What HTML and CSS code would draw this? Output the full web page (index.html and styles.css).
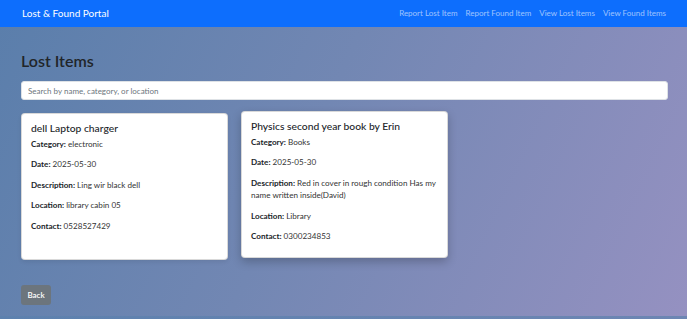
FILE: index.html
```html
<!DOCTYPE html>
<html lang="en">
<head>
    <meta charset="UTF-8">
    <meta name="viewport" content="width=device-width, initial-scale=1.0">
    <title>Lost Items</title>
    <link rel="stylesheet" href="styles.css">
</head>
<body>
    <div class="page">
        <nav class="navbar">
            <a class="brand" href="#">Lost &amp; Found Portal</a>
            <div class="nav-links">
                <a href="#">Report Lost Item</a>
                <a href="#">Report Found Item</a>
                <a href="#">View Lost Items</a>
                <a href="#">View Found Items</a>
            </div>
        </nav>

        <main class="content">
            <h2 class="page-title">Lost Items</h2>
            <input class="search" type="text" placeholder="Search by name, category, or location">

            <div class="card-grid">
                <div class="card">
                    <h5 class="card-title">dell Laptop charger</h5>
                    <p><strong>Category:</strong> electronic</p>
                    <p><strong>Date:</strong> 2025-05-30</p>
                    <p><strong>Description:</strong> Ling wir black dell</p>
                    <p><strong>Location:</strong> library cabin 05</p>
                    <p><strong>Contact:</strong> 0528527429</p>
                </div>
                <div class="card hovered">
                    <h5 class="card-title">Physics second year book by Erin</h5>
                    <p><strong>Category:</strong> Books</p>
                    <p><strong>Date:</strong> 2025-05-30</p>
                    <p><strong>Description:</strong> Red in cover in rough condition Has my name written inside(David)</p>
                    <p><strong>Location:</strong> Library</p>
                    <p><strong>Contact:</strong> 0300234853</p>
                </div>
            </div>

            <a class="btn-back" href="#">Back</a>
        </main>
    </div>
</body>
</html>
```

FILE: styles.css
```css
* {
    margin: 0;
    padding: 0;
    box-sizing: border-box;
}

html {
    background: linear-gradient(90deg, #5d81ae, #6d86b3);
}

body {
    font-family: Lato, "Noto Sans", sans-serif;
    font-size: 8.1px;
    line-height: 12.4px;
    color: #212529;
}

.page {
    height: 316px;
    background: linear-gradient(115deg, #5a7eab 0%, #7287b3 45%, #9591c1 100%);
}

.navbar {
    height: 27px;
    background: #0d6efd;
    display: flex;
    align-items: center;
    justify-content: space-between;
    padding: 0 21px 0 22px;
}

.brand {
    color: #fff;
    text-decoration: none;
    font-size: 10px;
}

.nav-links {
    display: flex;
    gap: 8px;
}

.nav-links a {
    color: rgba(255, 255, 255, 0.6);
    text-decoration: none;
    font-size: 8px;
}

.content {
    padding: 24px 19px 0 21px;
}

.page-title {
    font-size: 16px;
    font-weight: 600;
    line-height: 20px;
    margin-bottom: 10px;
}

.search {
    display: block;
    width: 100%;
    height: 19px;
    border: 1px solid #dee2e6;
    border-radius: 3px;
    padding: 0 6px;
    font-family: inherit;
    font-size: 8px;
    background: #fff;
    outline: none;
}

.search::placeholder {
    color: #6c757d;
}

.card-grid {
    display: grid;
    grid-template-columns: repeat(3, 1fr);
    gap: 13px;
    margin-top: 13px;
}

.card {
    background: #fff;
    border: 1px solid rgba(0, 0, 0, 0.15);
    border-radius: 4px;
    padding: 8px 8px 7px 9px;
    box-shadow: 0 2px 4px rgba(0, 0, 0, 0.08);
}

.card.hovered {
    transform: translateY(-2px);
    box-shadow: 0 4px 10px rgba(0, 0, 0, 0.22);
}

.card-title {
    font-size: 10.3px;
    font-weight: 500;
    line-height: 13px;
    margin-bottom: 3px;
}

.card p {
    margin-bottom: 8px;
    color: #333;
}

.card strong {
    font-weight: 700;
    color: #212529;
}

.btn-back {
    display: inline-block;
    margin-top: 25px;
    width: 30px;
    height: 20px;
    line-height: 20px;
    text-align: center;
    background: #6c757d;
    color: #fff;
    border-radius: 3px;
    text-decoration: none;
    font-size: 8px;
    font-weight: 600;
}
```
